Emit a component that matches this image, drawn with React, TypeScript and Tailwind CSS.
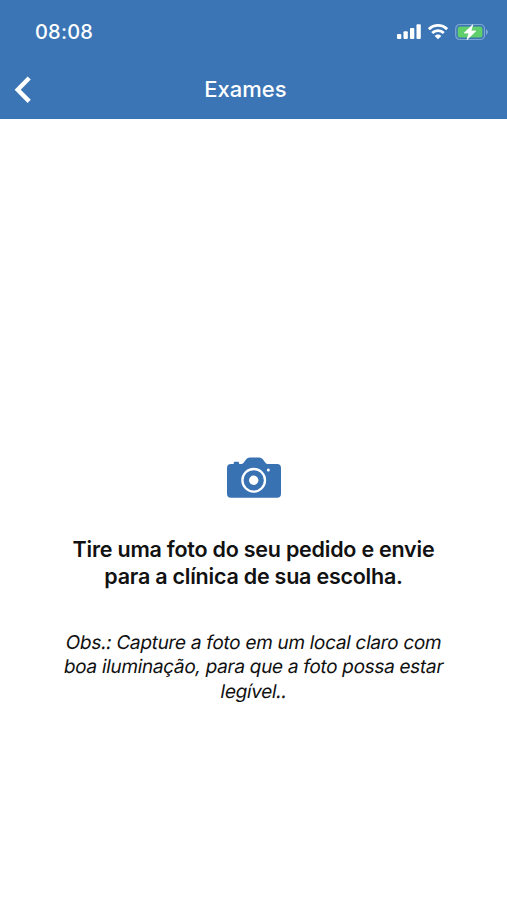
const NOTE_LINES = [
  "Obs.: Capture a foto em um local claro com",
  "boa iluminação, para que a foto possa estar",
  "legível..",
];

function SignalIcon() {
  return (
    <svg width="24" height="16" viewBox="0 0 24 16" fill="white">
      <rect x="0" y="10" width="4.3" height="5" rx="1" />
      <rect x="6.5" y="7.3" width="4.3" height="7.7" rx="1" />
      <rect x="13" y="4" width="4.3" height="11" rx="1" />
      <rect x="19.5" y="0.3" width="4.3" height="14.7" rx="1" />
    </svg>
  );
}

function WifiIcon() {
  return (
    <svg width="20" height="16" viewBox="0 0 20 16" fill="none" stroke="white" strokeWidth="2.8">
      <path d="M0.9 5.2 A12.8 12.8 0 0 1 19.1 5.2" />
      <path d="M4.2 9 A8.2 8.2 0 0 1 15.8 9" />
      <path d="M10 15.2 L6.7 11.9 A4.7 4.7 0 0 1 13.3 11.9 Z" fill="white" stroke="none" />
    </svg>
  );
}

function BatteryIcon() {
  return (
    <svg width="34" height="18" viewBox="0 0 34 18">
      <rect x="0.7" y="1.5" width="28.8" height="15" rx="4.3" fill="none" stroke="#7ea6d3" strokeWidth="1.2" />
      <path d="M31 6.3 C33.6 7.3 33.6 10.7 31 11.7 Z" fill="#7ea6d3" />
      <rect x="2.7" y="3.5" width="24.8" height="11" rx="2.5" fill="#5fce6b" />
      <path
        d="M17.8 1.8 L9.2 10 H14 L12 16.6 L20.8 8 H15.9 Z"
        fill="white"
        stroke="white"
        strokeWidth="0.8"
        strokeLinejoin="round"
      />
    </svg>
  );
}

function CameraIcon() {
  return (
    <svg width="54" height="41" viewBox="0 0 54 41">
      <path
        d="M4 6.9 H6.7 V5.9 Q6.7 4.8 7.8 4.8 H11 Q12.1 4.8 12.1 5.9 V6.9 H14.2 Q15.5 6.9 16.4 5.9 L19.2 2.3 Q20.6 0.6 22.8 0.6 H32.2 Q34.4 0.6 35.8 2.3 L38.6 5.9 Q39.5 6.9 40.8 6.9 H50 Q54 6.9 54 10.9 V36.8 Q54 40.8 50 40.8 H4 Q0 40.8 0 36.8 V10.9 Q0 6.9 4 6.9 Z"
        fill="#3872b3"
      />
      <circle cx="26.7" cy="23.3" r="11.3" fill="none" stroke="white" strokeWidth="2.3" />
      <circle cx="26.7" cy="23.3" r="4.7" fill="white" />
      <circle cx="41.3" cy="13" r="1.5" fill="white" />
    </svg>
  );
}

function Header() {
  return (
    <header className="h-[119px] bg-[#3b75b6] text-white">
      <div className="flex h-[60px] items-center justify-between pt-1 pr-[18px] pl-[35px]">
        <span className="text-[20px] font-medium tracking-[0.2px]">08:08</span>
        <div className="flex items-center gap-[7px]">
          <SignalIcon />
          <WifiIcon />
          <BatteryIcon />
        </div>
      </div>
      <div className="grid h-[59px] grid-cols-[60px_1fr_76px] items-center">
        <button aria-label="Voltar" className="pl-[14px]">
          <svg width="18" height="28" viewBox="0 0 18 28" fill="none" stroke="white" strokeWidth="4.4">
            <path d="M15.2 2 L3.7 13.7 L15.2 25.4" />
          </svg>
        </button>
        <h1 className="text-center text-[22px] font-medium">Exames</h1>
      </div>
    </header>
  );
}

export default function App() {
  return (
    <div className="flex h-[900px] w-[507px] flex-col bg-white font-['Inter',sans-serif]">
      <Header />
      <main className="flex flex-col items-center pt-[338px] text-center text-[#111111]">
        <CameraIcon />
        <h2 className="mt-[38px] text-[21.5px] leading-[27px] font-semibold tracking-[-0.23px] whitespace-nowrap">
          Tire uma foto do seu pedido e envie
          <br />
          para a clínica de sua escolha.
        </h2>
        {/* upright letterforms, slanted line by line */}
        <p className="mt-[41px] text-[19px] leading-[24.4px] tracking-[-0.31px] whitespace-nowrap">
          {NOTE_LINES.map((line) => (
            <span key={line} className="block -skew-x-10">
              {line}
            </span>
          ))}
        </p>
      </main>
    </div>
  );
}
